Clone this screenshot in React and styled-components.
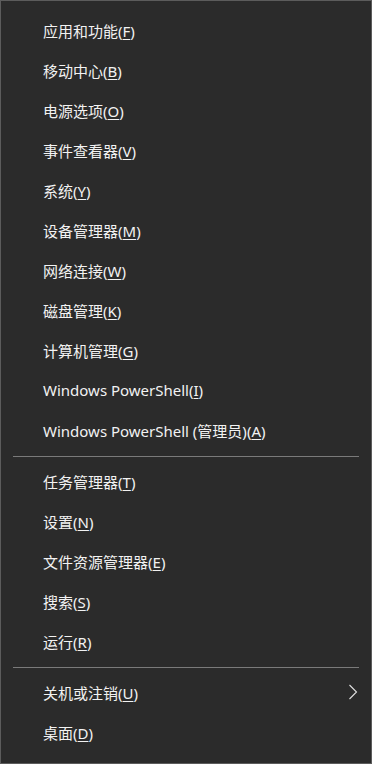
import React from "react";
import styled, { createGlobalStyle } from "styled-components";

const GlobalStyle = createGlobalStyle`
    html, body {
        margin: 0;
        padding: 0;
        background: #2b2b2b;
    }
`;

const Menu = styled.div`
    width: 372px;
    height: 764px;
    box-sizing: border-box;
    background: #2b2b2b;
    border: 1px solid #5c5c5c;
    padding: 9px 0 11px;
    display: flex;
    flex-direction: column;
    font-family: "Noto Sans", "Noto Sans CJK SC", sans-serif;
    font-size: 15px;
    color: #f2f2f2;
`;

const Item = styled.div`
    height: 40px;
    display: flex;
    align-items: center;
    justify-content: space-between;
    padding: 0 13px 0 42px;
`;

const Label = styled.span`
    white-space: nowrap;
    u {
        text-decoration: underline;
        text-underline-offset: 2px;
        text-decoration-thickness: 1px;
    }
`;

const Separator = styled.div`
    height: 1px;
    margin: 6px 12px 4px;
    background: #7a7a7a;
`;

const Chevron = () => (
    <svg width="10" height="16" viewBox="0 0 10 16">
        <path d="M1.5 1 L8.5 8 L1.5 15" fill="none" stroke="#e0e0e0" strokeWidth="1.1" />
    </svg>
);

const groups = [
    [
        ["应用和功能", "F"],
        ["移动中心", "B"],
        ["电源选项", "O"],
        ["事件查看器", "V"],
        ["系统", "Y"],
        ["设备管理器", "M"],
        ["网络连接", "W"],
        ["磁盘管理", "K"],
        ["计算机管理", "G"],
        ["Windows PowerShell", "I"],
        ["Windows PowerShell (管理员)", "A"],
    ],
    [
        ["任务管理器", "T"],
        ["设置", "N"],
        ["文件资源管理器", "E"],
        ["搜索", "S"],
        ["运行", "R"],
    ],
    [
        ["关机或注销", "U", true],
        ["桌面", "D"],
    ],
];

export default function App() {
    return (
        <>
            <GlobalStyle />
            <Menu>
                {groups.map((group, gi) => (
                    <React.Fragment key={gi}>
                        {gi > 0 && <Separator />}
                        {group.map(([text, key, sub]) => (
                            <Item key={key}>
                                <Label>
                                    {text}(<u>{key}</u>)
                                </Label>
                                {sub && <Chevron />}
                            </Item>
                        ))}
                    </React.Fragment>
                ))}
            </Menu>
        </>
    );
}
